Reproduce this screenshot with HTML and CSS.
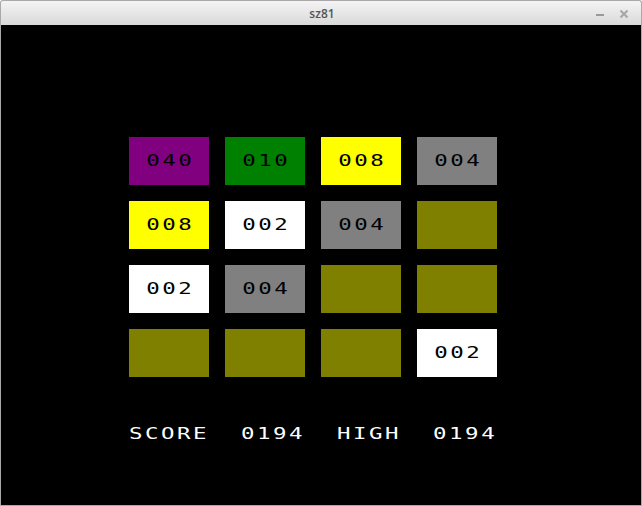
FILE: index.html
```html
<!DOCTYPE html>
<html>
<head>
<meta charset="utf-8">
<title>sz81</title>
<link rel="stylesheet" href="styles.css">
</head>
<body>
<div class="window">
  <div class="titlebar">
    <span class="title">sz81</span>
    <div class="controls">
      <svg class="btn" width="10" height="10" viewBox="0 0 10 10"><rect x="1" y="5" width="8" height="2" fill="#9a9a9a"/></svg>
      <svg class="btn" width="10" height="10" viewBox="0 0 10 10"><path d="M1.5 1.5 L8.5 8.5 M8.5 1.5 L1.5 8.5" stroke="#a8a8a8" stroke-width="2.2"/></svg>
    </div>
  </div>
  <div class="screen">
    <div class="board">
      <div class="tile purple"><span class="zx">040</span></div>
      <div class="tile green"><span class="zx">010</span></div>
      <div class="tile yellow"><span class="zx">008</span></div>
      <div class="tile gray"><span class="zx">004</span></div>
      <div class="tile yellow"><span class="zx">008</span></div>
      <div class="tile white"><span class="zx">002</span></div>
      <div class="tile gray"><span class="zx">004</span></div>
      <div class="tile olive"></div>
      <div class="tile white"><span class="zx">002</span></div>
      <div class="tile gray"><span class="zx">004</span></div>
      <div class="tile olive"></div>
      <div class="tile olive"></div>
      <div class="tile olive"></div>
      <div class="tile olive"></div>
      <div class="tile olive"></div>
      <div class="tile white"><span class="zx">002</span></div>
    </div>
    <div class="scoreline"><span class="zx score">SCORE  0194  HIGH  0194</span></div>
  </div>
</div>
</body>
</html>
```
FILE: styles.css
```css
html, body {
  margin: 0;
  padding: 0;
  background: #ffffff;
}
.window {
  width: 642px;
  height: 506px;
  display: flex;
  flex-direction: column;
  box-sizing: border-box;
}
.titlebar {
  height: 25px;
  flex: none;
  box-sizing: border-box;
  border: 1px solid #a9a9a9;
  border-bottom: none;
  border-radius: 3px 3px 0 0;
  background: linear-gradient(#f4f4f4, #d9d9d9);
  display: flex;
  align-items: center;
  justify-content: center;
  position: relative;
}
.title {
  font-family: "Open Sans", "DejaVu Sans", sans-serif;
  font-size: 12px;
  font-weight: 600;
  color: #555555;
  margin-left: 2px;
  margin-top: 1px;
}
.controls {
  position: absolute;
  right: 12px;
  top: 8px;
  display: flex;
  gap: 14px;
}
.btn {
  display: block;
}
.screen {
  flex: 1;
  background: #000000;
  border: 1px solid #a9a9a9;
  border-top: none;
  padding: 112px 0 0 128px;
  box-sizing: border-box;
}
.board {
  display: grid;
  grid-template-columns: repeat(4, 80px);
  grid-auto-rows: 48px;
  gap: 16px;
}
.tile {
  display: flex;
  align-items: center;
  justify-content: center;
}
.purple { background: #800080; }
.green { background: #008000; }
.yellow { background: #ffff00; }
.gray { background: #808080; }
.white { background: #ffffff; }
.olive { background: #808000; }
.zx {
  display: inline-block;
  font-family: "DejaVu Sans Mono", "Liberation Mono", monospace;
  font-size: 16px;
  line-height: 16px;
  height: 16px;
  letter-spacing: 1.8px;
  padding-left: 1.8px;
  color: #000000;
  transform: scaleX(1.4);
  white-space: pre;
}
.scoreline {
  margin-top: 48px;
  height: 16px;
}
.score {
  color: #ffffff;
  padding-left: 0;
  transform-origin: left center;
}
```
